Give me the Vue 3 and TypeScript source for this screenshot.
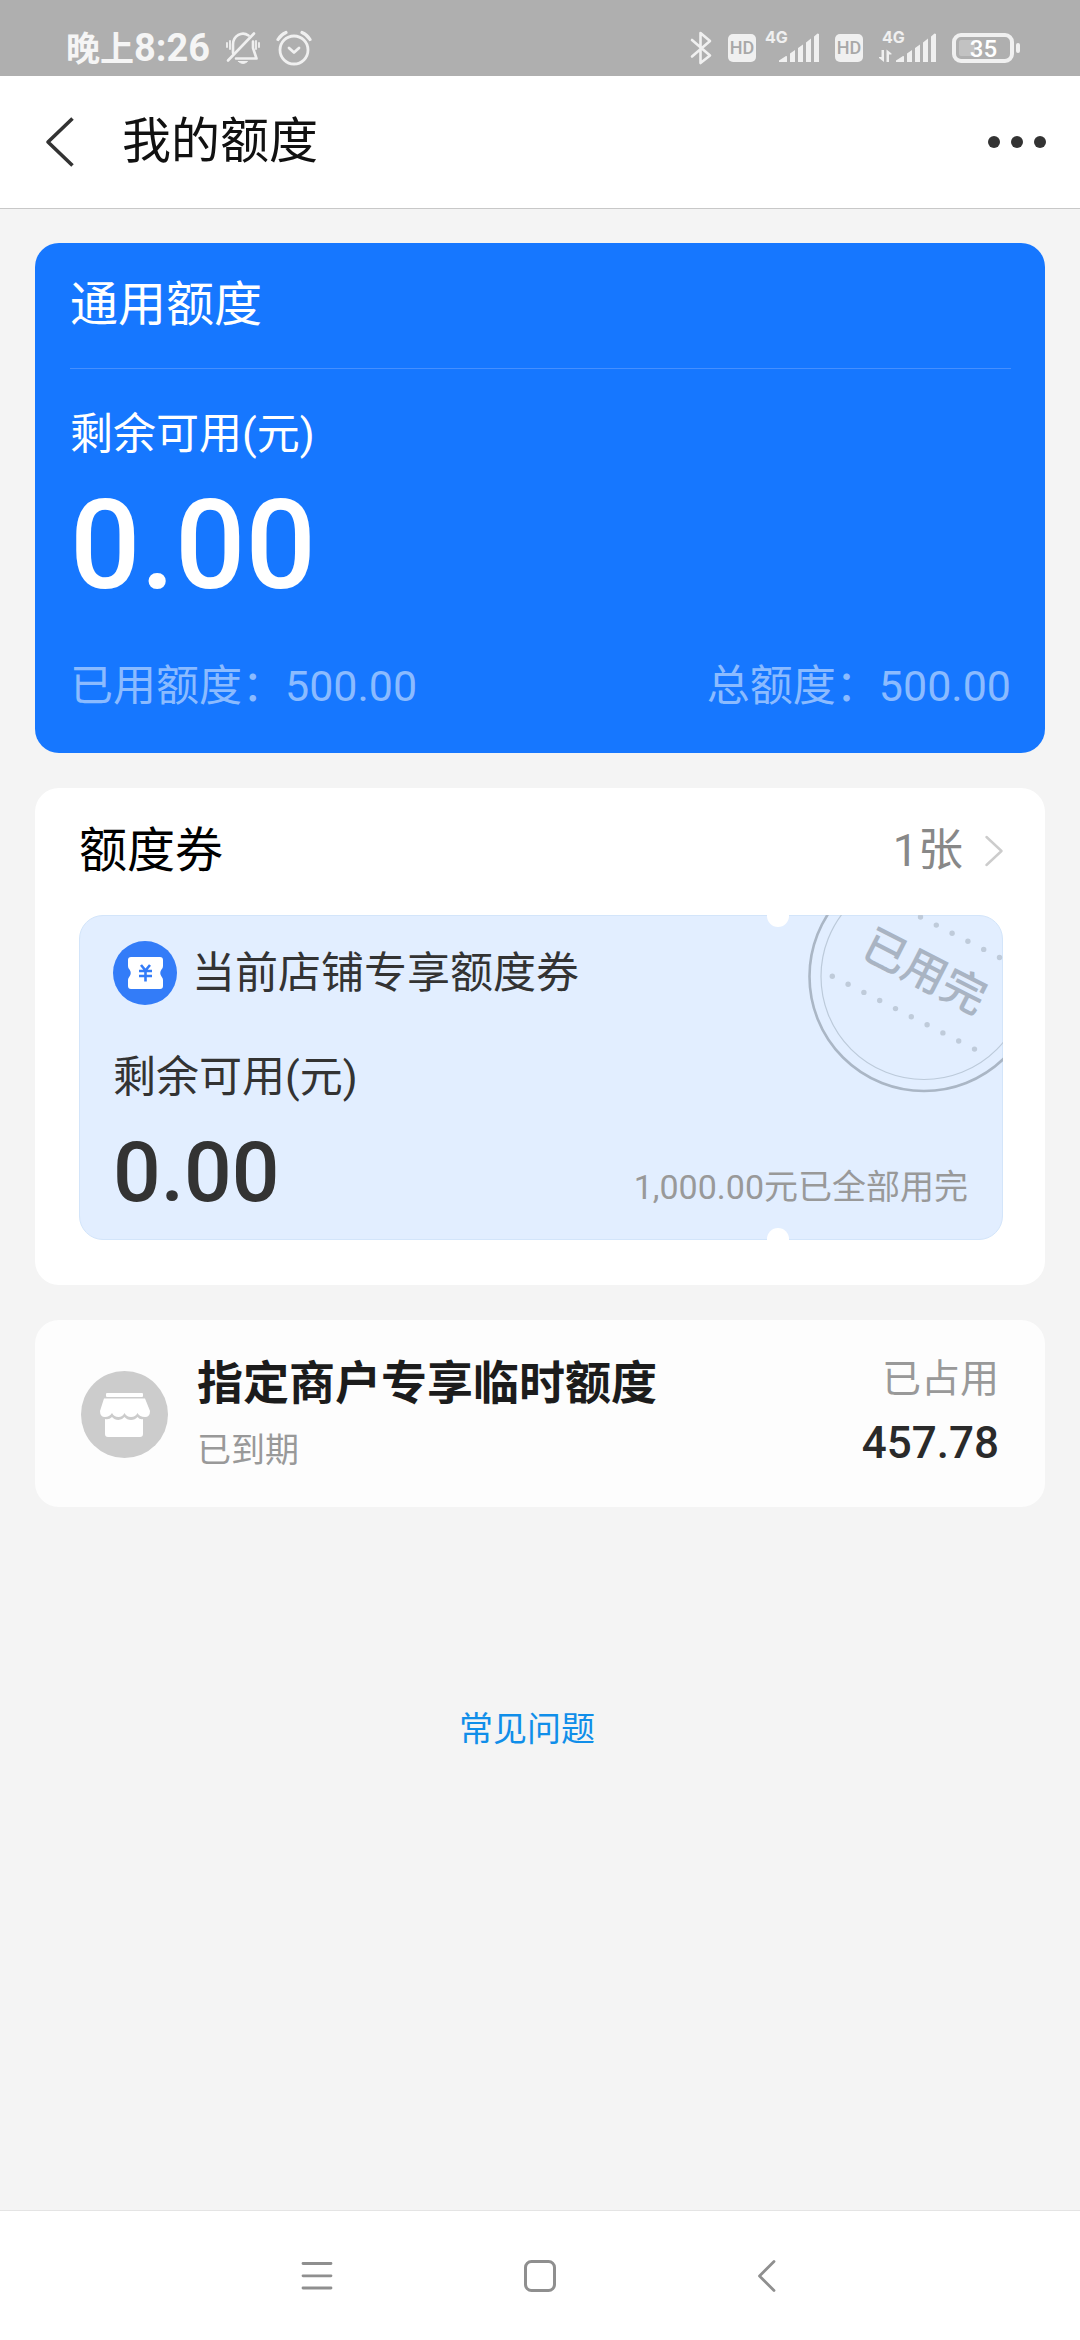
<script setup lang="ts">
interface Signal {
  id: number
  width: number
  transfer: boolean
}

const time = { period: '晚上', clock: '8:26' }
const battery = 35

const signals: Signal[] = [
  { id: 1, width: 55, transfer: false },
  { id: 2, width: 65, transfer: true },
]

const general = { available: '0.00', used: '500.00', total: '500.00' }

const coupon = {
  count: 1,
  name: '当前店铺专享额度券',
  available: '0.00',
  note: '1,000.00元已全部用完',
}

const merchant = {
  name: '指定商户专享临时额度',
  status: '已到期',
  label: '已占用',
  amount: '457.78',
}

const dotStep = { x: 15.8, y: 8.1 }
const dots = Array.from({ length: 10 }, (_, i) => i)
</script>

<template>
  <div class="page">
    <div class="status">
      <div class="status-side">
        <span class="time">{{ time.period }}<span class="clock">{{ time.clock }}</span></span>
        <svg class="bell" width="34" height="34" viewBox="0 0 34 34" fill="none" stroke="#f0f0f0" stroke-width="2.6" stroke-linecap="round" stroke-linejoin="round">
          <path d="M7 22V13.500A10 11 0 0 1 22.500 4.500" />
          <path d="M27 10.500V17L30.500 27.500H10" />
          <path d="M2 29.500L28 2.500" />
          <path d="M12.500 30.500H21.500Q17 34.500 12.500 30.500Z" fill="#f0f0f0" stroke-width="1" />
          <path d="M1 12V16M4 10V18M30 10V18M33 12V16" stroke-width="1.800" />
        </svg>
        <svg class="alarm" width="36" height="36" viewBox="0 0 36 36" fill="none" stroke="#f0f0f0" stroke-width="2.800" stroke-linecap="round" stroke-linejoin="round">
          <circle cx="18" cy="20" r="14" />
          <path d="M13 18L18 22.500L23 18" />
          <path d="M2 9.500Q5 4.500 10 2.500M26 2.500Q31 4.500 34 9.500" stroke-width="3.200" />
        </svg>
      </div>
      <div class="status-side">
        <svg width="22" height="34" viewBox="0 0 22 34" fill="none" stroke="#f0f0f0" stroke-width="2.600" stroke-linecap="round" stroke-linejoin="round">
          <path d="M2 9L20 24.500L10.500 32V2L20 10L2 25.500" />
        </svg>
        <span v-for="s in signals" :key="s.id" class="cell">
          <span class="hd">HD</span>
          <svg class="signal" :width="s.width" height="34" :viewBox="`${40 - s.width} 0 ${s.width} 34`" fill="#f0f0f0">
            <text class="net" x="-14" y="12">4G</text>
            <path d="M0 31V29.500L7 25Q8 24.500 8 26V31ZM11 31V22.500L16 19V31ZM19 31V17L24 13.500V31ZM27 31V11.500L32 7.500V31ZM35 31V5.500L38.500 2.500L40 3V31Z" />
            <path v-if="s.transfer" d="M-14.500 19H-12V31L-17 27V26H-14.500ZM-9.500 31H-7V23.500H-4.500V22.500L-9.500 18.500Z" />
          </svg>
        </span>
        <svg class="battery" width="68" height="30" viewBox="0 0 68 30" fill="none">
          <rect x="2" y="2" width="58" height="26" rx="7" stroke="#f0f0f0" stroke-width="4" />
          <rect x="7" y="7" width="16" height="16" rx="2" fill="#c2c2c2" />
          <rect x="64" y="10" width="4" height="10" rx="2" fill="#f0f0f0" />
          <text class="level" x="31.500" y="24" text-anchor="middle">{{ battery }}</text>
        </svg>
      </div>
    </div>

    <header class="bar">
      <button class="back" type="button" aria-label="返回">
        <svg width="30" height="50" viewBox="0 0 30 50" fill="none" stroke="#333" stroke-width="3.600" stroke-linejoin="round">
          <path d="M27.500 1.500L3 25L27.500 48.500" />
        </svg>
      </button>
      <h1>我的额度</h1>
      <button class="more" type="button" aria-label="更多">
        <svg width="58" height="12" viewBox="0 0 58 12" fill="#333">
          <circle cx="6" cy="6" r="6" /><circle cx="29" cy="6" r="6" /><circle cx="52" cy="6" r="6" />
        </svg>
      </button>
    </header>

    <main>
      <section class="general">
        <h2>通用额度</h2>
        <p class="label">剩余可用(元)</p>
        <p class="sum">{{ general.available }}</p>
        <div class="totals">
          <span>已用额度：{{ general.used }}</span>
          <span>总额度：{{ general.total }}</span>
        </div>
      </section>

      <section class="coupons">
        <div class="coupons-head">
          <h2>额度券</h2>
          <a href="#coupons">
            {{ coupon.count }}张
            <svg width="18" height="32" viewBox="0 0 18 32" fill="none" stroke="#ccc" stroke-width="2.400" stroke-linecap="round" stroke-linejoin="round">
              <path d="M1.500 2L16.500 16L1.500 30" />
            </svg>
          </a>
        </div>
        <article class="coupon">
          <svg class="stamp" width="196" height="180" viewBox="0 0 196 180" fill="none">
            <circle cx="117" cy="61.500" r="114.500" stroke="#aab6c5" stroke-width="2.600" />
            <circle cx="117" cy="61.500" r="103" stroke="#bccada" stroke-width="1.200" />
            <g fill="#bfcbda">
              <circle v-for="i in dots" :key="'a' + i" :cx="113.500 + i * dotStep.x" :cy="2 + i * dotStep.y" r="2.700" />
              <circle v-for="i in dots" :key="'b' + i" :cx="25.300 + i * dotStep.x" :cy="61.200 + i * dotStep.y" r="2.700" />
            </g>
            <text class="stamp-text" x="118" y="72" text-anchor="middle" transform="rotate(27 118 56)">已用完</text>
          </svg>
          <span class="notch notch-top"></span>
          <span class="notch notch-bottom"></span>
          <h3>
            <svg width="64" height="64" viewBox="0 0 64 64">
              <circle cx="32" cy="32" r="32" fill="#337cf8" />
              <path d="M18 16H47Q50 16 50 19V25Q50 27 48.500 28.500Q46 32 48.500 35.500Q50 37 50 39V45Q50 48 47 48H18Q15 48 15 45V39Q15 37 16.500 35.500Q19 32 16.500 28.500Q15 27 15 25V19Q15 16 18 16Z" fill="#fff" />
              <path d="M28 24L32.500 29.500L37 24M32.500 29.500V40.500M26 30H39M26 35H39" fill="none" stroke="#337cf8" stroke-width="2.600" />
            </svg>
            {{ coupon.name }}
          </h3>
          <p class="label">剩余可用(元)</p>
          <div class="coupon-foot">
            <span class="coupon-sum">{{ coupon.available }}</span>
            <span class="note">{{ coupon.note }}</span>
          </div>
        </article>
      </section>

      <section class="merchant">
        <svg class="shop" width="87" height="87" viewBox="0 0 87 87">
          <circle cx="43.500" cy="43.500" r="43.500" fill="#ccc" />
          <g fill="#fff">
            <rect x="25" y="22" width="37" height="4" rx="1" />
            <path d="M23 27.500H64L69 40Q69 46 64 46Q58.500 46 56.500 42Q54.500 46 50 46Q45.500 46 43.500 42Q41.500 46 37.500 46Q33 46 31 42Q28.500 46 24 46Q19 46 19 40Z" />
            <path d="M24 48Q28 49 31 46Q33.500 49 37.500 49Q41 49 43.500 46Q46 49 50 49Q54 49 56.500 46Q59 49 62 48V63Q62 66 59 66H27Q24 66 24 63Z" />
          </g>
        </svg>
        <div class="merchant-info">
          <h2>{{ merchant.name }}</h2>
          <p>{{ merchant.status }}</p>
        </div>
        <div class="merchant-sum">
          <p>{{ merchant.label }}</p>
          <strong>{{ merchant.amount }}</strong>
        </div>
      </section>

      <a class="faq" href="#faq">常见问题</a>
    </main>

    <nav>
      <button type="button" aria-label="最近任务">
        <svg width="32" height="32" viewBox="0 0 32 32" stroke="#8f8f8f" stroke-width="2.800" stroke-linecap="round">
          <path d="M2 3.500H30M2 15.800H30M2 28H30" />
        </svg>
      </button>
      <button type="button" aria-label="主屏幕">
        <svg width="32" height="32" viewBox="0 0 32 32" fill="none" stroke="#8f8f8f" stroke-width="3">
          <rect x="1.500" y="1.500" width="29" height="29" rx="6" />
        </svg>
      </button>
      <button type="button" aria-label="返回">
        <svg width="32" height="32" viewBox="0 0 32 32" fill="none" stroke="#8f8f8f" stroke-width="2.800" stroke-linecap="round" stroke-linejoin="round">
          <path d="M27 1.500L12.500 16L27 30.500" />
        </svg>
      </button>
    </nav>
  </div>
</template>

<style>
body {
  margin: 0;
  background: #f4f4f4;
}
</style>

<style scoped>
.page {
  display: flex;
  flex-direction: column;
  min-height: 100vh;
  background: #f4f4f4;
  font-family: Roboto, "Noto Sans CJK SC", sans-serif;
  font-size: 43px;
  line-height: 60px;
  color: #333;
}

h1, h2, h3, p {
  margin: 0;
  font-size: inherit;
  font-weight: 400;
}

button {
  display: flex;
  align-items: center;
  justify-content: center;
  padding: 0;
  border: 0;
  background: none;
}

a {
  text-decoration: none;
}

svg {
  display: block;
  flex: none;
}

.status {
  display: flex;
  justify-content: space-between;
  align-items: center;
  height: 56px;
  padding: 20px 60px 0 66px;
  background: #afafaf;
  color: #f5f5f5;
}

.status-side {
  display: flex;
  align-items: center;
  gap: 16px;
}

.time {
  font-size: 34px;
  font-weight: 700;
  line-height: 40px;
}

.clock {
  font-size: 38px;
}

.cell {
  display: flex;
  align-items: center;
  gap: 8px;
}

.signal {
  overflow: visible;
}

.hd {
  width: 28px;
  border-radius: 5px;
  background: #f0f0f0;
  color: #a8a8a8;
  font-size: 18px;
  font-weight: 500;
  line-height: 28px;
  text-align: center;
}

.net {
  font-family: Inter, sans-serif;
  font-size: 16px;
  font-weight: 700;
}

.level {
  fill: #fff;
  font-size: 24px;
  font-weight: 500;
}

.bar {
  display: flex;
  align-items: center;
  height: 132px;
  padding: 0 34px 0 45px;
  border-bottom: 1px solid #c8c8c8;
  background: #fff;
}

.bar h1 {
  flex: 1;
  margin-left: 47px;
  font-size: 49px;
  color: #111;
}

main {
  display: flex;
  flex: 1;
  flex-direction: column;
  gap: 35px;
  padding: 34px 35px;
}

section {
  border-radius: 24px;
  background: #fff;
}

.general {
  padding: 0 34px 37px 35px;
  background: #1677ff;
  color: #fff;
}

.general h2 {
  padding: 32px 0 33px;
  border-bottom: 1px solid #458fff;
  font-size: 48px;
}

.general .label {
  margin-top: 35px;
}

.sum {
  margin-top: 19px;
  font-size: 124px;
  font-weight: 500;
  line-height: 126px;
}

.totals {
  display: flex;
  justify-content: space-between;
  margin-top: 47px;
  color: #8bbbff;
}

.coupons {
  padding: 33px 42px 45px 44px;
}

.coupons-head {
  display: flex;
  justify-content: space-between;
  align-items: center;
}

.coupons-head h2 {
  font-size: 48px;
  color: #000;
}

.coupons-head a {
  display: flex;
  align-items: center;
  gap: 22px;
  font-size: 45px;
  color: #888;
}

.coupon {
  position: relative;
  margin-top: 34px;
  padding: 25px 34px 24px 33px;
  border: 1px solid #d3e5fa;
  border-radius: 24px;
  background: #e2eeff;
}

.stamp {
  position: absolute;
  top: -1px;
  right: -1px;
  border-top-right-radius: 24px;
}

.stamp-text {
  fill: #a9b4c3;
  font-size: 44px;
  font-weight: 500;
}

.notch {
  position: absolute;
  right: 213px;
  width: 22px;
  height: 12px;
  background: #fff;
}

.notch-top {
  top: -1px;
  border-radius: 0 0 11px 11px;
}

.notch-bottom {
  bottom: -1px;
  border-radius: 11px 11px 0 0;
}

.coupon h3 {
  display: flex;
  align-items: center;
  gap: 15px;
}

.coupon .label {
  margin-top: 42px;
}

.coupon-foot {
  display: flex;
  justify-content: space-between;
  align-items: flex-end;
  margin-top: 24px;
}

.coupon-sum {
  font-size: 84px;
  font-weight: 500;
  line-height: 84px;
}

.note {
  font-size: 34px;
  line-height: 56px;
  color: #999;
}

.merchant {
  display: flex;
  align-items: center;
  padding: 35px 46px 33px;
  background: #fdfdfd;
}

.merchant-info {
  flex: 1;
  margin-left: 29px;
}

.merchant-info h2 {
  font-size: 46px;
  font-weight: 700;
  line-height: 56px;
  color: #1c1c1c;
}

.merchant-info p {
  margin-top: 15px;
  font-size: 34px;
  line-height: 48px;
  color: #999;
}

.merchant-sum {
  align-self: flex-start;
  text-align: right;
}

.merchant-sum p {
  margin-bottom: 12px;
  font-size: 39px;
  line-height: 48px;
  color: #999;
}

.merchant-sum strong {
  display: block;
  font-size: 44px;
  font-weight: 500;
  line-height: 56px;
  color: #2a2a2a;
}

.faq {
  align-self: center;
  margin-top: 163px;
  margin-right: 26px;
  font-size: 34px;
  line-height: 48px;
  color: #108ee9;
}

nav {
  display: grid;
  grid-template-columns: repeat(3, 1fr);
  height: 129px;
  padding: 0 19%;
  border-top: 1px solid #e4e4e4;
  background: #fff;
}
</style>
